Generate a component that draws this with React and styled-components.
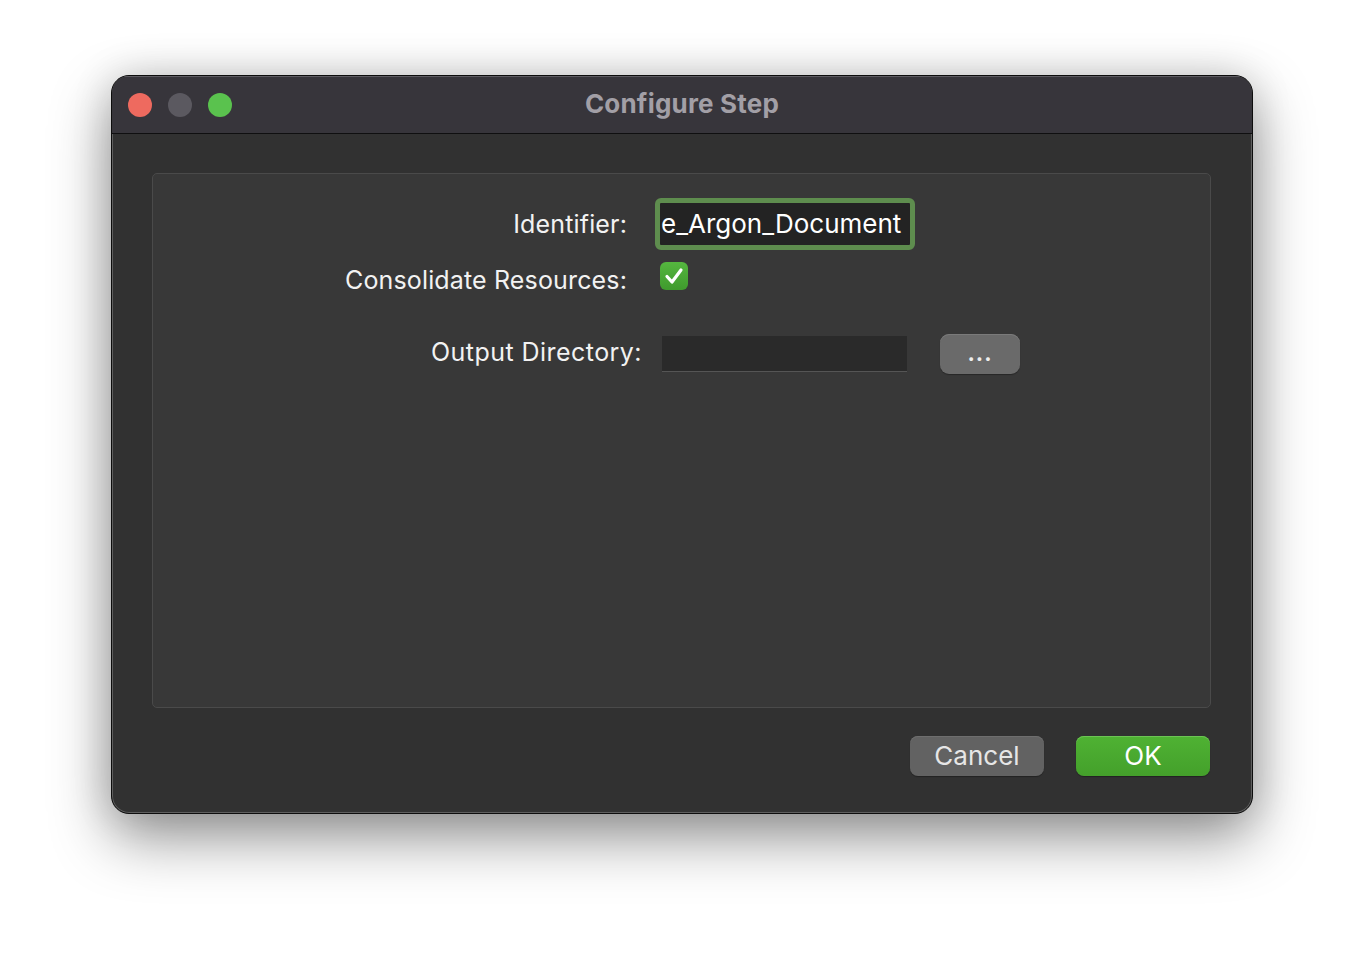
import React from "react";
import styled, { createGlobalStyle } from "styled-components";

const Global = createGlobalStyle`
  html, body { margin: 0; padding: 0; background: #ffffff; }
  body { font-family: Inter, "Noto Sans", sans-serif; }
`;

const Page = styled.div`
  width: 1364px;
  height: 962px;
  display: flex;
  justify-content: center;
  align-items: flex-start;
  padding-top: 75px;
  box-sizing: border-box;
  background: #ffffff;
`;

const Window = styled.div`
  width: 1142px;
  height: 739px;
  box-sizing: border-box;
  border-radius: 18px;
  border: 1px solid #0d0d0d;
  background: #313131;
  box-shadow: inset 0 0 0 1px #5e5e5e, 0 24px 60px rgba(0, 0, 0, 0.42),
    0 0 40px rgba(0, 0, 0, 0.14);
  display: flex;
  flex-direction: column;
  overflow: hidden;
`;

const TitleBar = styled.div`
  height: 57px;
  flex: none;
  background: #37353b;
  border-bottom: 1px solid #0f0f10;
  box-shadow: inset 0 1px 0 #5e5c62;
  display: grid;
  grid-template-columns: 1fr auto 1fr;
  align-items: center;
  padding: 0 16px;
`;

const Lights = styled.div`
  display: flex;
  gap: 16px;
`;

const Light = styled.span`
  width: 24px;
  height: 24px;
  border-radius: 50%;
  background: ${(p) => p.color};
`;

const Title = styled.div`
  font-family: Inter, "Noto Sans", sans-serif;
  font-weight: 700;
  font-size: 26px;
  color: #a29fa6;
  letter-spacing: 0.2px;
  margin-top: -3px;
`;

const Body = styled.div`
  flex: 1;
  display: flex;
  flex-direction: column;
  padding: 39px 41px 36px 40px;
`;

const Group = styled.div`
  height: 535px;
  box-sizing: border-box;
  background: #383838;
  border: 1px solid #4a4a4a;
  border-radius: 5px;
  display: flex;
  flex-direction: column;
  padding-top: 24px;
`;

const Row = styled.div`
  display: flex;
  align-items: center;
  height: ${(p) => p.h}px;
  margin-top: ${(p) => p.mt || 0}px;
`;

const Label = styled.div`
  width: ${(p) => p.w}px;
  text-align: right;
  font-size: 25px;
  color: #f2f2f2;
  letter-spacing: ${(p) => p.ls || 0.15}px;
  margin-right: ${(p) => p.gap}px;
  margin-top: ${(p) => p.dy || 0}px;
  flex: none;
`;

const FocusRing = styled.div`
  width: 260px;
  height: 52px;
  box-sizing: border-box;
  border: 5px solid #5e8d4e;
  border-radius: 6px;
  background: #232323;
  display: flex;
  align-items: center;
  overflow: hidden;
  flex: none;
`;

const FieldText = styled.span`
  font-size: 26px;
  color: #ffffff;
  white-space: nowrap;
  margin-left: 1px;
  margin-top: -2px;
`;

const Checkbox = styled.div`
  width: 28px;
  height: 28px;
  border-radius: 6px;
  background: linear-gradient(#55b63f, #3f9a2d);
  display: flex;
  align-items: center;
  justify-content: center;
  margin-left: 5px;
  margin-top: -8px;
`;

const Field = styled.div`
  width: 245px;
  height: 36px;
  background: #2a2a2a;
  border-bottom: 1px solid #555555;
  box-sizing: border-box;
  flex: none;
`;

const SmallButton = styled.div`
  width: 80px;
  height: 40px;
  margin-left: 33px;
  border-radius: 9px;
  background: #6a6a6a;
  box-shadow: inset 0 1px 0 #7a7a7a, 0 1px 1px rgba(0, 0, 0, 0.3);
  color: #eeeeee;
  font-size: 22px;
  font-weight: 700;
  display: flex;
  align-items: center;
  justify-content: center;
  padding-bottom: 2px;
  box-sizing: border-box;
  letter-spacing: 1px;
`;

const Footer = styled.div`
  display: flex;
  justify-content: flex-end;
  gap: 32px;
  margin-top: 28px;
  padding-right: 1px;
`;

const Button = styled.div`
  width: 134px;
  height: 40px;
  border-radius: 8px;
  box-sizing: border-box;
  display: flex;
  align-items: center;
  justify-content: center;
  font-size: 26px;
  color: ${(p) => (p.primary ? "#ffffff" : "#e6e6e6")};
  background: ${(p) =>
    p.primary ? "linear-gradient(#4fb233, #44a02b)" : "#626262"};
  box-shadow: inset 0 1px 0 ${(p) => (p.primary ? "#6cc454" : "#6e6e6e")},
    0 1px 1px rgba(0, 0, 0, 0.3);
  padding-bottom: 2px;
`;

export default function App() {
  return (
    <>
      <Global />
      <Page>
        <Window>
          <TitleBar>
            <Lights>
              <Light color="#ee6a5f" />
              <Light color="#5b5960" />
              <Light color="#5ac24e" />
            </Lights>
            <Title>Configure Step</Title>
            <div />
          </TitleBar>
          <Body>
            <Group>
              <Row h={52}>
                <Label w={474} gap={28}>Identifier:</Label>
                <FocusRing>
                  <FieldText>e_Argon_Document</FieldText>
                </FocusRing>
              </Row>
              <Row h={40} mt={10}>
                <Label w={474} gap={28}>Consolidate Resources:</Label>
                <Checkbox>
                  <svg width="20" height="18" viewBox="0 0 20 18">
                    <path
                      d="M3 9.5 L8 15 L17 3"
                      fill="none"
                      stroke="#ffffff"
                      strokeWidth="3.2"
                      strokeLinecap="round"
                      strokeLinejoin="round"
                    />
                  </svg>
                </Checkbox>
              </Row>
              <Row h={40} mt={34}>
                <Label w={489} gap={20} ls={0.45} dy={-4}>
                  Output Directory:
                </Label>
                <Field />
                <SmallButton>...</SmallButton>
              </Row>
            </Group>
            <Footer>
              <Button>Cancel</Button>
              <Button primary>OK</Button>
            </Footer>
          </Body>
        </Window>
      </Page>
    </>
  );
}
